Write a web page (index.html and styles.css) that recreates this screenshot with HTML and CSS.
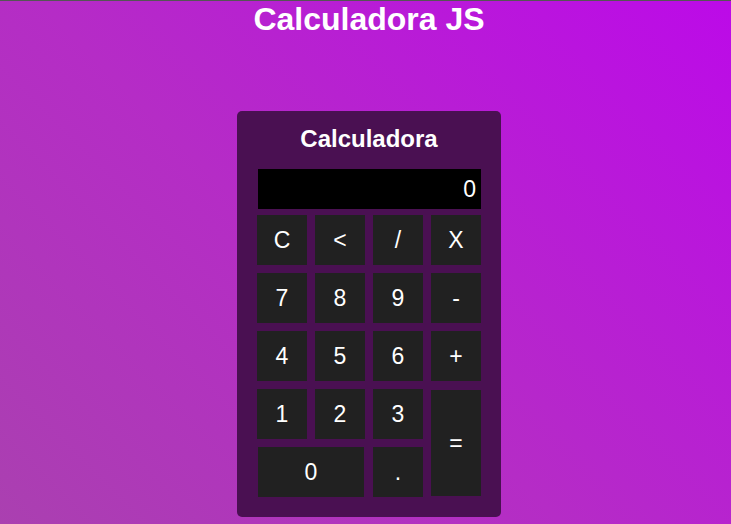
FILE: index.html
```html
<!DOCTYPE html>
<html lang="pt">
<head>
<meta charset="utf-8">
<title>Calculadora JS</title>
<link rel="stylesheet" href="styles.css">
</head>
<body>
<div class="topline"></div>
<main class="page">
  <h1 class="page-title">Calculadora JS</h1>
  <section class="calc">
    <h2 class="calc-title">Calculadora</h2>
    <div class="display">0</div>
    <div class="keys">
      <button class="key">C</button>
      <button class="key">&lt;</button>
      <button class="key">/</button>
      <button class="key">X</button>
      <button class="key">7</button>
      <button class="key">8</button>
      <button class="key">9</button>
      <button class="key">-</button>
      <button class="key">4</button>
      <button class="key">5</button>
      <button class="key">6</button>
      <button class="key">+</button>
      <button class="key">1</button>
      <button class="key">2</button>
      <button class="key">3</button>
      <button class="key key-equals">=</button>
      <button class="key key-zero">0</button>
      <button class="key">.</button>
    </div>
  </section>
</main>
</body>
</html>
```

FILE: styles.css
```css
html, body {
  margin: 0;
  padding: 0;
}

body {
  min-height: 524px;
  background: linear-gradient(45deg, #aa40b0 0%, #b52cc6 45%, #bc0ae8 100%);
  font-family: "Liberation Sans", Arial, sans-serif;
  color: #ffffff;
}

.topline {
  height: 1px;
  background: #555555;
}

.page {
  display: flex;
  flex-direction: column;
  align-items: center;
  padding-left: 7px;
}

.page-title {
  margin: 0;
  font-size: 32px;
  line-height: 36px;
  font-weight: bold;
  text-align: center;
}

.calc {
  margin-top: 74px;
  width: 224px;
  padding: 14px 20px 20px;
  background: #4a1052;
  border-radius: 5px;
}

.calc-title {
  margin: 0 0 16px;
  font-size: 24px;
  line-height: 28px;
  font-weight: bold;
  text-align: center;
}

.display {
  height: 40px;
  margin: 0 0 6px 1px;
  padding-right: 5px;
  background: #000000;
  font-size: 23px;
  line-height: 40px;
  text-align: right;
}

.keys {
  display: grid;
  grid-template-columns: repeat(4, 50px);
  grid-auto-rows: 50px;
  gap: 8px;
}

.key {
  margin: 0;
  padding: 0;
  border: none;
  background: #212121;
  color: #ffffff;
  font-family: "Liberation Sans", Arial, sans-serif;
  font-size: 23px;
}

.key-equals {
  grid-column: 4;
  grid-row: 4 / span 2;
  margin: 1px 0;
}

.key-zero {
  grid-column: 1 / span 2;
  margin: 0 1px;
}
```
